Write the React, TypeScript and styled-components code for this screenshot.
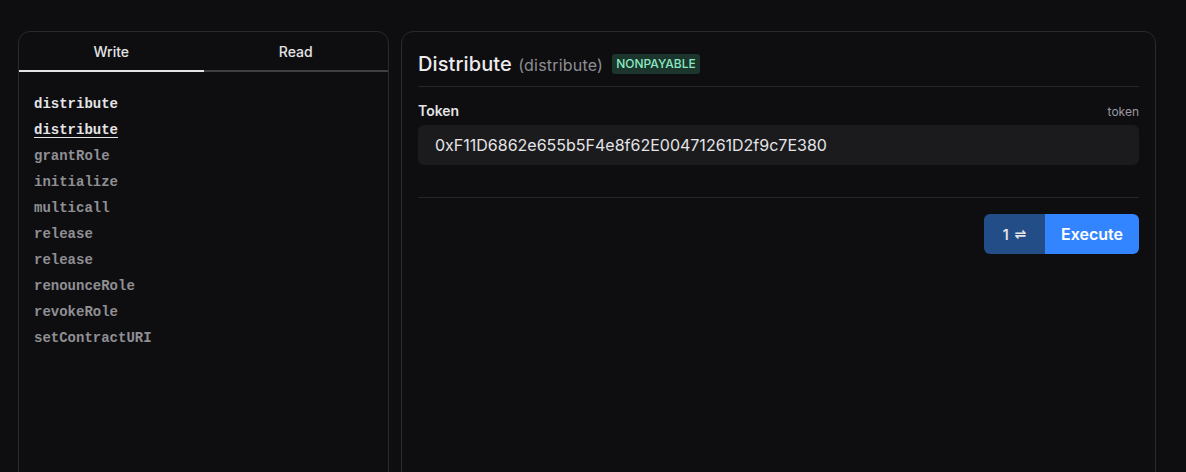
import React, { useState } from 'react';
import styled, { createGlobalStyle } from 'styled-components';

const GlobalStyle = createGlobalStyle`
  html, body {
    margin: 0;
    padding: 0;
    background: #0e0e10;
    font-family: Inter, "Noto Sans", sans-serif;
    color: #e6e6e6;
    overflow: hidden;
  }
`;

const Page = styled.div`
  display: flex;
  gap: 12px;
  padding: 31px 30px 0 18px;
  height: 472px;
  box-sizing: border-box;
  overflow: hidden;
`;

const Panel = styled.div<{ $width?: number }>`
  box-sizing: border-box;
  ${(p) => (p.$width ? `width: ${p.$width}px; flex-shrink: 0;` : 'flex: 1;')}
  height: 480px;
  border: 1px solid #2a2a2e;
  border-radius: 12px;
  background: #0e0e10;
  overflow: hidden;
`;

const Tabs = styled.div`
  display: flex;
`;

const Tab = styled.button<{ $active?: boolean }>`
  flex: 1;
  height: 40px;
  background: none;
  border: none;
  border-bottom: 2px solid ${(p) => (p.$active ? '#e4e4e7' : '#3f3f43')};
  color: #e4e4e7;
  font-family: Inter, sans-serif;
  font-size: 14px;
  font-weight: 500;
  padding: 1px 0 0;
  cursor: pointer;
`;

const FnList = styled.ul`
  list-style: none;
  margin: 0;
  padding: 19px 15px;
  display: flex;
  flex-direction: column;
`;

const FnItem = styled.li<{ $active?: boolean; $primary?: boolean }>`
  font-family: "Liberation Mono", "DejaVu Sans Mono", monospace;
  font-size: 14px;
  line-height: 26px;
  font-weight: 700;
  color: ${(p) => (p.$primary ? '#e4e4e7' : '#8f8f94')};
  text-decoration: ${(p) => (p.$active ? 'underline' : 'none')};
  text-underline-offset: 3px;
  cursor: pointer;
`;

const Body = styled.div`
  padding: 16px 16px 0;
`;

const Header = styled.div`
  display: flex;
  align-items: center;
  gap: 9px;
  height: 32px;
  padding-bottom: 6px;
  border-bottom: 1px solid #27272a;
`;

const Title = styled.h2`
  margin: 0;
  font-size: 20px;
  font-weight: 500;
  color: #ececee;
  letter-spacing: 0.1px;
`;

const Sub = styled.span`
  font-size: 16px;
  font-weight: 400;
  color: #8f8f94;
  margin-left: 1px;
  letter-spacing: 0.2px;
`;

const Badge = styled.span`
  background: #1c362d;
  color: #8ae9c1;
  font-size: 12px;
  font-weight: 500;
  line-height: 14px;
  padding: 3px 4px;
  border-radius: 3px;
`;

const Field = styled.div`
  padding: 15px 0 32px;
  border-bottom: 1px solid #27272a;
`;

const LabelRow = styled.div`
  display: flex;
  justify-content: space-between;
  align-items: flex-end;
  margin-bottom: 6px;
`;

const Label = styled.label`
  font-size: 14px;
  font-weight: 600;
  color: #e4e4e7;
`;

const TypeHint = styled.span`
  font-size: 12px;
  color: #9a9aa0;
`;

const Input = styled.input`
  width: 100%;
  box-sizing: border-box;
  height: 40px;
  background: #1b1b1e;
  border: none;
  border-radius: 6px;
  padding: 0 17px;
  font-family: Inter, sans-serif;
  font-size: 16px;
  color: #e4e4e7;
  outline: none;
`;

const Actions = styled.div`
  display: flex;
  justify-content: flex-end;
  padding-top: 16px;
`;

const ButtonGroup = styled.div`
  display: flex;
  height: 40px;
  border-radius: 6px;
  overflow: hidden;
`;

const CountButton = styled.button`
  width: 61px;
  background: #234d86;
  border: none;
  color: #e4e4e7;
  font-family: Inter, sans-serif;
  font-size: 14px;
  font-weight: 600;
  display: flex;
  align-items: center;
  justify-content: center;
  gap: 6px;
  cursor: pointer;
`;

const Arrows = styled.span`
  font-family: "DejaVu Sans", sans-serif;
  font-size: 14px;
`;

const ExecuteButton = styled.button`
  width: 94px;
  background: #3385ff;
  border: none;
  color: #ffffff;
  font-family: Inter, sans-serif;
  font-size: 16px;
  font-weight: 600;
  cursor: pointer;
`;

const functions = [
  { name: 'distribute', primary: true },
  { name: 'distribute', primary: true, active: true },
  { name: 'grantRole' },
  { name: 'initialize' },
  { name: 'multicall' },
  { name: 'release' },
  { name: 'release' },
  { name: 'renounceRole' },
  { name: 'revokeRole' },
  { name: 'setContractURI' },
];

export default function App() {
  const [tab, setTab] = useState<'write' | 'read'>('write');
  const [token, setToken] = useState('0xF11D6862e655b5F4e8f62E00471261D2f9c7E380');

  return (
    <>
      <GlobalStyle />
      <Page>
        <Panel $width={371}>
          <Tabs>
            <Tab $active={tab === 'write'} onClick={() => setTab('write')}>Write</Tab>
            <Tab $active={tab === 'read'} onClick={() => setTab('read')}>Read</Tab>
          </Tabs>
          <FnList>
            {functions.map((fn, i) => (
              <FnItem key={i} $primary={fn.primary} $active={fn.active}>
                {fn.name}
              </FnItem>
            ))}
          </FnList>
        </Panel>
        <Panel>
          <Body>
            <Header>
              <Title>
                Distribute <Sub>(distribute)</Sub>
              </Title>
              <Badge>NONPAYABLE</Badge>
            </Header>
            <Field>
              <LabelRow>
                <Label>Token</Label>
                <TypeHint>token</TypeHint>
              </LabelRow>
              <Input value={token} onChange={(e) => setToken(e.target.value)} />
            </Field>
            <Actions>
              <ButtonGroup>
                <CountButton>
                  1 <Arrows>⇌</Arrows>
                </CountButton>
                <ExecuteButton>Execute</ExecuteButton>
              </ButtonGroup>
            </Actions>
          </Body>
        </Panel>
      </Page>
    </>
  );
}
